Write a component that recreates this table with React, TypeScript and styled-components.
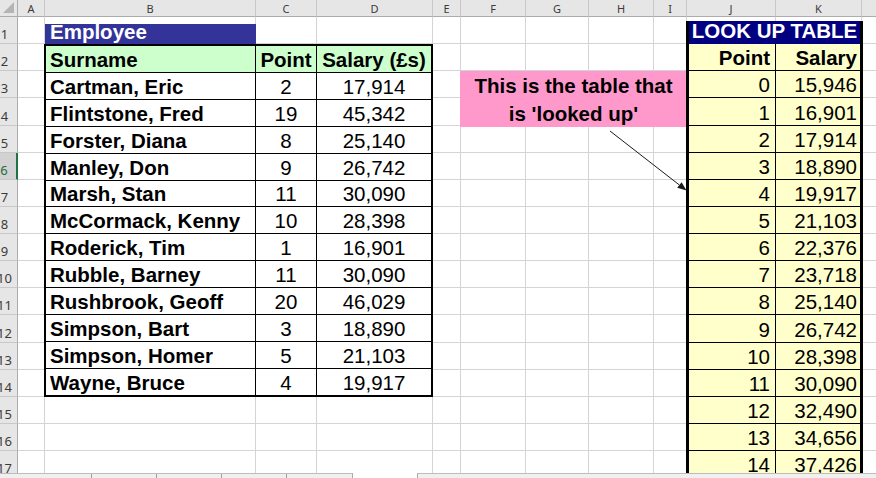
import React from "react";
import styled, { createGlobalStyle } from "styled-components";

const GlobalStyle = createGlobalStyle`
  *, *::before, *::after { box-sizing: border-box; }
  html, body { margin: 0; padding: 0; background: #fff; }
  body { width: 876px; height: 478px; overflow: hidden; }
`;

const CELL_FONT = `"Liberation Sans", Arial, sans-serif`;
const HEAD_FONT = `"Noto Sans", "DejaVu Sans", sans-serif`;
const GRID = "#d4d4d4";

const COL_WIDTHS = [18, 27, 211, 61, 116, 28, 65, 63, 65, 33, 89, 86, 64];
const LETTERS = ["A", "B", "C", "D", "E", "F", "G", "H", "I", "J", "K", ""];
const ROWS = 17;
const ACTIVE_ROW = 6;

const employees: [string, number, string][] = [
  ["Cartman, Eric", 2, "17,914"],
  ["Flintstone, Fred", 19, "45,342"],
  ["Forster, Diana", 8, "25,140"],
  ["Manley, Don", 9, "26,742"],
  ["Marsh, Stan", 11, "30,090"],
  ["McCormack, Kenny", 10, "28,398"],
  ["Roderick, Tim", 1, "16,901"],
  ["Rubble, Barney", 11, "30,090"],
  ["Rushbrook, Geoff", 20, "46,029"],
  ["Simpson, Bart", 3, "18,890"],
  ["Simpson, Homer", 5, "21,103"],
  ["Wayne, Bruce", 4, "19,917"],
];

const lookup: string[] = [
  "15,946", "16,901", "17,914", "18,890", "19,917", "21,103", "22,376", "23,718",
  "25,140", "26,742", "28,398", "30,090", "32,490", "34,656", "37,426",
];

const Sheet = styled.div`
  position: relative;
  height: 473px;
  overflow: hidden;
  display: grid;
  grid-template-columns: ${COL_WIDTHS.map((w) => `${w}px`).join(" ")};
  grid-template-rows: 17px repeat(${ROWS}, 27.125px);
`;

const Corner = styled.div`
  grid-column: 1;
  grid-row: 1;
  background: #e6e6e6;
  border-right: 1px solid #acacac;
  border-bottom: 1px solid #acacac;
  display: flex;
  align-items: flex-end;
  justify-content: flex-end;
  padding: 0 3px 3px 0;
`;

const ColHead = styled.div<{ $c: number }>`
  grid-column: ${(p) => p.$c};
  grid-row: 1;
  background: #e6e6e6;
  border-right: 1px solid #c8c8c8;
  border-bottom: 1px solid #acacac;
  display: flex;
  align-items: center;
  justify-content: center;
  font: 11px ${HEAD_FONT};
  color: #3b3b3b;
`;

const RowHead = styled.div<{ $r: number; $active?: boolean }>`
  grid-column: 1;
  grid-row: ${(p) => p.$r + 1};
  background: ${(p) => (p.$active ? "#d2d2d2" : "#e6e6e6")};
  border-right: ${(p) => (p.$active ? "2px solid #217346" : "1px solid #acacac")};
  border-bottom: 1px solid #c8c8c8;
  overflow: hidden;
  display: flex;
  align-items: flex-end;
  justify-content: center;
  padding-right: 8px;
  font: 13px ${HEAD_FONT};
  color: ${(p) => (p.$active ? "#1d6b3f" : "#3b3b3b")};
  white-space: nowrap;
`;

const Cell = styled.div<{ $r: number; $c: number }>`
  grid-column: ${(p) => p.$c};
  grid-row: ${(p) => p.$r + 1};
  border-right: 1px solid ${GRID};
  border-bottom: 1px solid ${GRID};
`;

const EmployeeTitle = styled.div`
  grid-column: 3;
  grid-row: 2;
  margin-top: 7px;
  background: #333399;
  color: #fff;
  display: flex;
  align-items: flex-end;
  padding: 0 5px;
  font: 700 20.5px ${CELL_FONT};
  white-space: nowrap;
  z-index: 1;
`;

const EmpTable = styled.div`
  grid-column: 3 / 6;
  grid-row: 3 / 16;
  margin-left: -1px;
  border: 2px solid #000;
  background: #000;
  display: grid;
  grid-template-columns: 209px 60px 1fr;
  grid-template-rows: repeat(13, 1fr);
  gap: 1px;
  z-index: 1;
`;

const TCell = styled.div<{ $align: "left" | "center"; $head?: boolean; $bold?: boolean }>`
  background: ${(p) => (p.$head ? "#ccffcc" : "#fff")};
  display: flex;
  align-items: flex-end;
  justify-content: ${(p) => (p.$align === "left" ? "flex-start" : "center")};
  padding: ${(p) => (p.$align === "left" ? "0 4px" : "0 2px")};
  font: ${(p) => (p.$bold ? 700 : 400)} 20.5px ${CELL_FONT};
  color: #000;
  white-space: nowrap;
  overflow: hidden;
`;

const LookupTitle = styled.div`
  grid-column: 11 / 13;
  grid-row: 2;
  margin: 4px -1px 0 -1px;
  border-left: 3px solid #000;
  border-right: 3px solid #000;
  background: #000080;
  color: #fff;
  display: flex;
  align-items: flex-end;
  justify-content: center;
  padding-bottom: 1.5px;
  font: 700 20.5px ${CELL_FONT};
  white-space: nowrap;
  z-index: 1;
`;

const LookupBody = styled.div`
  grid-column: 11 / 13;
  grid-row: 3 / 19;
  margin: 0 -1px;
  border-left: 3px solid #000;
  border-right: 3px solid #000;
  background: #000;
  display: grid;
  grid-template-columns: 86px 1fr;
  grid-template-rows: repeat(16, 26.125px);
  gap: 1px;
  z-index: 1;
`;

const LCell = styled.div<{ $pad: number; $bold?: boolean }>`
  background: #ffffcc;
  display: flex;
  align-items: flex-end;
  justify-content: flex-end;
  padding-right: ${(p) => p.$pad}px;
  font: ${(p) => (p.$bold ? 700 : 400)} 20.5px ${CELL_FONT};
  color: #000;
  white-space: nowrap;
`;

const Note = styled.div`
  grid-column: 7 / 11;
  grid-row: 4 / 6;
  margin: 0 0 -1px -1px;
  padding-top: 1px;
  background: #ff99cc;
  text-align: center;
  font: 700 20.5px/28px ${CELL_FONT};
  color: #000;
  white-space: nowrap;
  z-index: 1;
`;

const NoteLine = styled.span`
  display: block;
`;

const ArrowLayer = styled.svg`
  position: absolute;
  left: 600px;
  top: 120px;
  width: 90px;
  height: 80px;
  overflow: visible;
  pointer-events: none;
  z-index: 2;
`;

const BottomBar = styled.div`
  display: flex;
  height: 5px;
`;

const TabStrip = styled.div`
  display: flex;
  width: 353px;
  border-top: 1px solid #bdbdbd;
  border-right: 1px solid #a9a9a9;
  background: #f0f0f0;
`;

const TabSeg = styled.div<{ $w: number; $last?: boolean }>`
  width: ${(p) => p.$w}px;
  flex: ${(p) => (p.$last ? 1 : "none")};
  border-right: ${(p) => (p.$last ? "none" : "1px solid #9f9f9f")};
`;

const ScrollTrack = styled.div`
  flex: 1;
  margin-left: 64px;
  border-top: 1px solid #bdbdbd;
  border-left: 1px solid #a9a9a9;
  background: #f0f0f0;
`;

export default function App() {
  const bgCells: React.ReactNode[] = [];
  for (let r = 1; r <= ROWS; r++) {
    for (let c = 2; c <= 13; c++) {
      bgCells.push(<Cell key={`${r}-${c}`} $r={r} $c={c} />);
    }
  }

  return (
    <>
      <GlobalStyle />
      <Sheet>
        <Corner>
          <svg width="11" height="11" viewBox="0 0 11 11">
            <polygon points="11,0 11,11 0,11" fill="#b4b4b4" />
          </svg>
        </Corner>
        {LETTERS.map((l, i) => (
          <ColHead key={i} $c={i + 2}>
            {l}
          </ColHead>
        ))}
        {Array.from({ length: ROWS }, (_, i) => (
          <RowHead key={i} $r={i + 1} $active={i + 1 === ACTIVE_ROW}>
            {i + 1}
          </RowHead>
        ))}
        {bgCells}

        <EmployeeTitle>Employee</EmployeeTitle>
        <EmpTable>
          <TCell $align="left" $head $bold>Surname</TCell>
          <TCell $align="center" $head $bold>Point</TCell>
          <TCell $align="center" $head $bold>Salary (£s)</TCell>
          {employees.map(([name, pt, sal]) => (
            <React.Fragment key={name}>
              <TCell $align="left" $bold>{name}</TCell>
              <TCell $align="center">{pt}</TCell>
              <TCell $align="center">{sal}</TCell>
            </React.Fragment>
          ))}
        </EmpTable>

        <Note>
          <NoteLine>This is the table that</NoteLine>
          <NoteLine>is 'looked up'</NoteLine>
        </Note>

        <LookupTitle>LOOK UP TABLE</LookupTitle>
        <LookupBody>
          <LCell $pad={5} $bold>Point</LCell>
          <LCell $pad={3} $bold>Salary</LCell>
          {lookup.map((v, i) => (
            <React.Fragment key={i}>
              <LCell $pad={5}>{i}</LCell>
              <LCell $pad={3}>{v}</LCell>
            </React.Fragment>
          ))}
        </LookupBody>

        <ArrowLayer viewBox="0 0 90 80">
          <line x1="10" y1="11" x2="79.4" y2="65" stroke="#1a1a1a" strokeWidth="1" />
          <polygon points="86.5,70.5 77.2,67.8 81.6,62.2" fill="#1a1a1a" />
        </ArrowLayer>
      </Sheet>
      <BottomBar>
        <TabStrip>
          <TabSeg $w={92} />
          <TabSeg $w={65} />
          <TabSeg $w={65} />
          <TabSeg $w={65} />
          <TabSeg $w={65} $last />
        </TabStrip>
        <ScrollTrack />
      </BottomBar>
    </>
  );
}
